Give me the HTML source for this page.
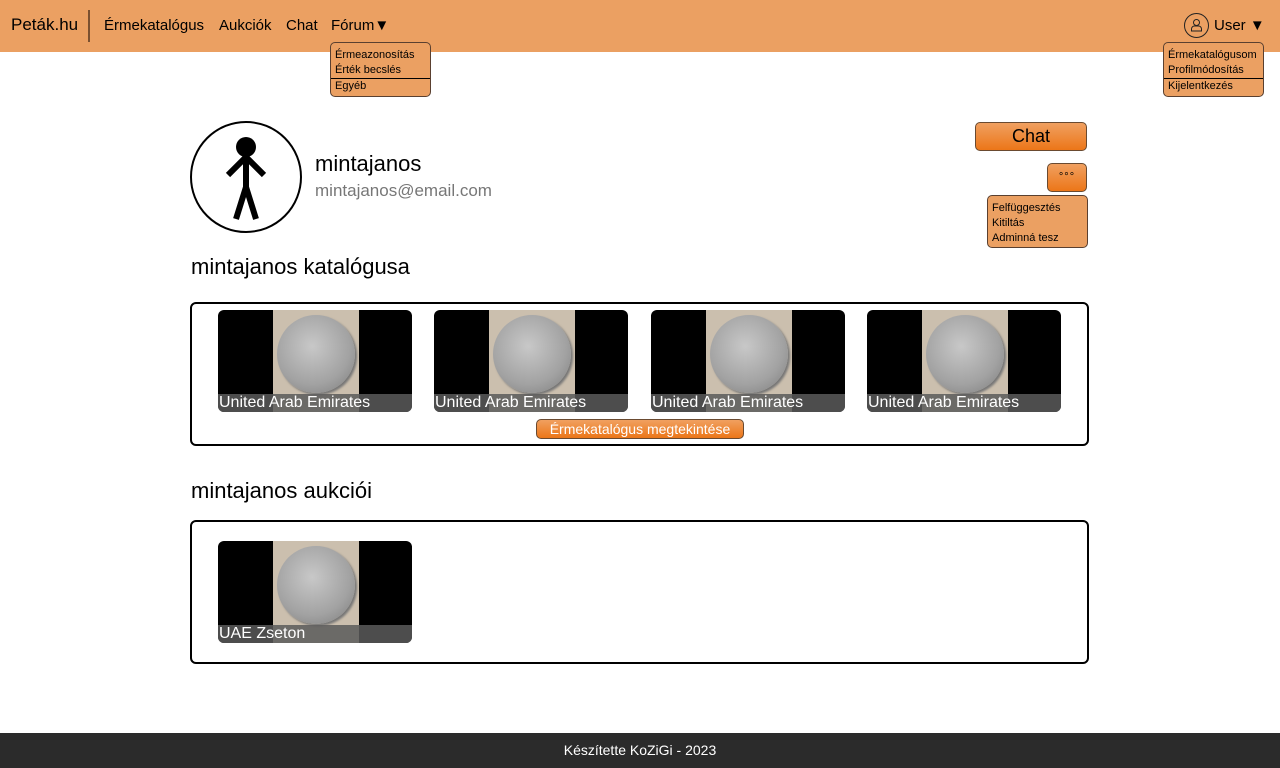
<!DOCTYPE html>
<html><head><meta charset="utf-8"><style>
*{box-sizing:border-box;margin:0;padding:0}
body{width:1280px;height:768px;position:relative;background:#fff;font-family:"Liberation Sans",sans-serif;color:#000;overflow:hidden}
.nav{position:absolute;left:0;top:0;width:1280px;height:52px;background:#eba062}
.a{position:absolute;font-size:15px;top:17px}
.dd{position:absolute;background:#eba062;border:1px solid #5a4030;border-radius:5px;font-size:11px;line-height:15px;overflow:hidden}
.dd div{padding:0 4px}
.btn{position:absolute;background:linear-gradient(#f0a060,#ec7618);border:1px solid #6a4a30;border-radius:5px;text-align:center}
.box{position:absolute;left:190px;width:899px;border:2px solid #000;border-radius:6px}
.card{position:absolute;width:194px;height:102px;background:#000;border-radius:6px;overflow:hidden}
.coin{position:absolute;left:55px;top:0;width:86px;height:102px;background:#cbbfae}
.coin::after{content:"";position:absolute;left:4px;top:5px;width:78px;height:78px;border-radius:50%;background:radial-gradient(circle at 45% 40%,#c8c8c8,#a2a2a2 60%,#7a7a7a);box-shadow:2px 2px 2px #777}
.cap{position:absolute;left:0;bottom:0;width:100%;height:18px;background:rgba(90,90,90,.85);color:#fff;font-size:16px;line-height:17px;white-space:nowrap;padding-left:1px}
h2{position:absolute;left:191px;font-size:22px;font-weight:normal}
</style></head><body>
<div class="nav">
<div class="a" style="left:11px;top:15px;font-size:17px">Peták.hu</div>
<div style="position:absolute;left:88px;top:10px;width:2px;height:32px;background:#7a5030"></div>
<div class="a" style="left:104px">Érmekatalógus</div>
<div class="a" style="left:219px">Aukciók</div>
<div class="a" style="left:286px">Chat</div>
<div class="a" style="left:331px">Fórum▼</div>
<div style="position:absolute;left:1184px;top:13px;width:25px;height:25px;border:1px solid #222;border-radius:50%"><svg width="23" height="23" viewBox="0 0 23 23"><circle cx="11.5" cy="8.5" r="3" fill="none" stroke="#222"/><path d="M6.5 17v-2a3 3 0 0 1 3-3h4a3 3 0 0 1 3 3v2z" fill="none" stroke="#222"/></svg></div>
<div class="a" style="left:1214px">User ▼</div>
</div>
<div class="dd" style="left:330px;top:42px;width:101px;height:55px;padding-top:5px"><div>Érmeazonosítás</div><div style="border-bottom:1px solid #000">Érték becslés</div><div>Egyéb</div></div>
<div class="dd" style="left:1163px;top:42px;width:101px;height:55px;padding-top:5px"><div>Érmekatalógusom</div><div style="border-bottom:1px solid #000">Profilmódosítás</div><div>Kijelentkezés</div></div>

<div style="position:absolute;left:190px;top:121px;width:112px;height:112px;border:2px solid #000;border-radius:50%">
<svg width="108" height="108" viewBox="0 0 108 108"><circle cx="54" cy="24" r="10"/><path d="M54 30v34M36 52l18-18 18 18M44 96l10-32 10 32" stroke="#000" stroke-width="6" fill="none"/></svg></div>
<div style="position:absolute;left:315px;top:151px;font-size:22px">mintajanos</div>
<div style="position:absolute;left:315px;top:181px;font-size:17px;color:#777">mintajanos@email.com</div>
<div class="btn" style="left:975px;top:122px;width:112px;height:29px;font-size:18px;line-height:27px">Chat</div>
<div class="btn" style="left:1047px;top:163px;width:40px;height:29px;font-size:11px;line-height:27px;letter-spacing:1px">°°°</div>
<div class="dd" style="left:987px;top:195px;width:101px;height:53px;padding-top:5px"><div>Felfüggesztés</div><div>Kitiltás</div><div>Adminná tesz</div></div>

<h2 style="top:254px">mintajanos katalógusa</h2>
<div class="box" style="top:302px;height:144px">
<div class="card" style="left:26px;top:6px"><div class="coin"></div><div class="cap">United Arab Emirates</div></div>
<div class="card" style="left:242px;top:6px"><div class="coin"></div><div class="cap">United Arab Emirates</div></div>
<div class="card" style="left:459px;top:6px"><div class="coin"></div><div class="cap">United Arab Emirates</div></div>
<div class="card" style="left:675px;top:6px"><div class="coin"></div><div class="cap">United Arab Emirates</div></div>
<div class="btn" style="left:344px;top:115px;width:208px;height:20px;color:#fff;font-size:14px;line-height:18px">Érmekatalógus megtekintése</div>
</div>
<h2 style="top:478px">mintajanos aukciói</h2>
<div class="box" style="top:520px;height:144px">
<div class="card" style="left:26px;top:19px"><div class="coin"></div><div class="cap">UAE Zseton</div></div>
</div>
<div style="position:absolute;left:0;top:733px;width:1280px;height:35px;background:#2b2b2b;color:#fff;font-size:14px;text-align:center;line-height:35px">Készítette KoZiGi - 2023</div>
</body></html>
